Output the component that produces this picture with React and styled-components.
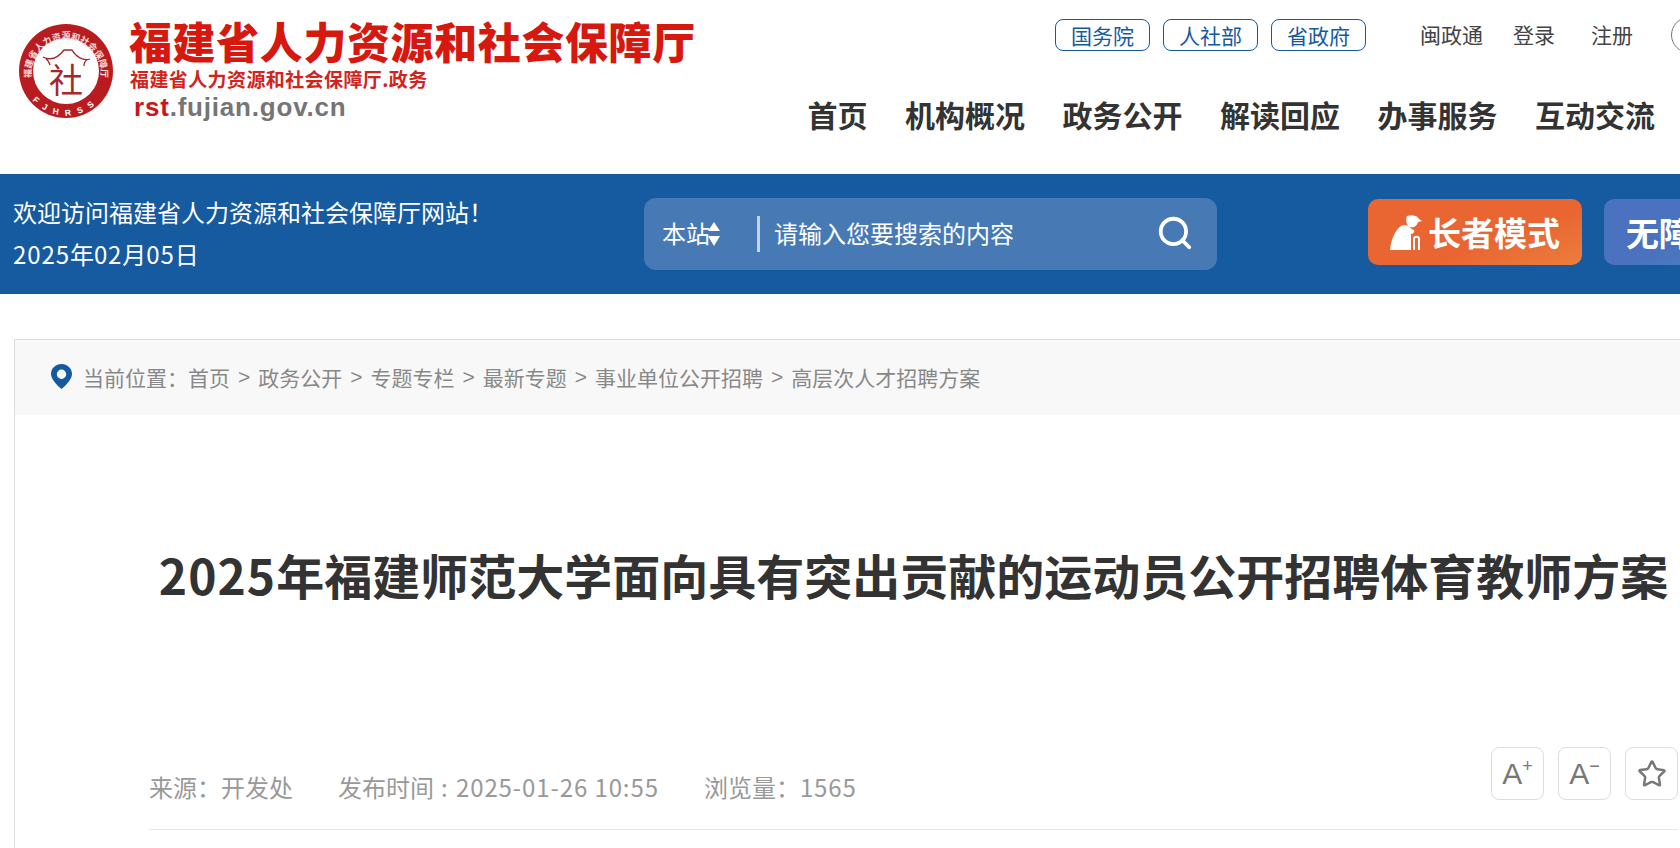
import React from 'react'
import styled, { createGlobalStyle } from 'styled-components'
import { Search, Star } from 'lucide-react'

const FONT = '"Noto Sans CJK SC", "Noto Sans", "Liberation Sans", sans-serif'

const GlobalStyle = createGlobalStyle`
  html, body {
    margin: 0;
    padding: 0;
    overflow: hidden;
    background: #fff;
    font-family: ${FONT};
  }
`

const Viewport = styled.div`
  width: 1680px;
  height: 848px;
  overflow: hidden;
`

const Page = styled.div`
  width: 1828px;
`

const Header = styled.header`
  height: 174px;
  display: flex;
  justify-content: space-between;
  padding: 0 121px 0 18px;
  box-sizing: border-box;
`

const Logo = styled.div`
  display: flex;
  align-items: flex-start;
  gap: 15px;
  padding-top: 23px;
`

const Brand = styled.div`
  display: flex;
  flex-direction: column;
  margin-top: -6px;
`

const BrandName = styled.div`
  font-size: 43px;
  line-height: 46px;
  font-weight: 900;
  letter-spacing: 0.6px;
  color: #d6180f;
  white-space: nowrap;
`

const BrandSub = styled.div`
  font-size: 19px;
  line-height: 24px;
  margin: 4px 0 0 1px;
  font-weight: 700;
  letter-spacing: 0.4px;
  color: #d2231c;
  white-space: nowrap;
`

const BrandUrl = styled.div`
  font-family: "Liberation Sans", sans-serif;
  font-size: 26px;
  line-height: 30px;
  margin: 1px 0 0 5px;
  font-weight: 700;
  letter-spacing: 0.8px;
  color: #757575;
  span {
    color: #c8161d;
  }
`

const HeaderRight = styled.div`
  display: flex;
  flex-direction: column;
  align-items: flex-end;
  padding-top: 19px;
`

const TopLinks = styled.div`
  display: flex;
  align-items: center;
  height: 32px;
`

const Pills = styled.div`
  display: flex;
  gap: 13px;
  margin-right: 54px;
`

const Pill = styled.a`
  width: 95px;
  height: 32px;
  box-sizing: border-box;
  border: 1px solid #15599f;
  border-radius: 8px;
  display: flex;
  align-items: center;
  justify-content: center;
  font-size: 21px;
  color: #15599f;
`

const TextLink = styled.a`
  font-size: 21px;
  line-height: 28px;
  margin-top: -2px;
  margin-left: ${p => p.$gap || 0}px;
  color: #444;
  white-space: nowrap;
`

const RoundButton = styled.div`
  width: 36px;
  height: 36px;
  box-sizing: border-box;
  border: 1px solid #777;
  border-radius: 50%;
  margin-left: 38px;
`

const Nav = styled.nav`
  display: flex;
  gap: 37.5px;
  margin: 43px 52px 0 0;
`

const NavItem = styled.a`
  font-size: 30px;
  line-height: 40px;
  font-weight: 700;
  color: #333;
  white-space: nowrap;
`

const Bar = styled.div`
  height: 120px;
  background: #165a9f;
  display: flex;
  align-items: center;
  padding-left: 13px;
`

const Welcome = styled.div`
  width: 631px;
  margin-top: -3px;
  font-size: 24px;
  line-height: 42px;
  color: #fff;
  white-space: nowrap;
  flex-shrink: 0;
`

const Num = styled.span`
  letter-spacing: ${p => p.$spacing || 0.9}px;
`

const SearchBox = styled.div`
  width: 573px;
  height: 72px;
  border-radius: 12px;
  background: #477ab5;
  display: flex;
  align-items: center;
  padding: 0 25px 0 18px;
  box-sizing: border-box;
  color: #fff;
  flex-shrink: 0;
`

const Scope = styled.div`
  display: flex;
  align-items: center;
  width: 95px;
  padding-bottom: 3px;
  font-size: 24px;
  svg {
    margin: 3px 0 0 -3px;
  }
`

const Divider = styled.div`
  width: 3px;
  height: 36px;
  background: #c5d3e6;
  margin-right: 14px;
`

const Placeholder = styled.div`
  flex: 1;
  padding-bottom: 4px;
  font-size: 24px;
`

const SearchIcon = styled(Search)`
  margin: -2px -2px 0 0;
`

const ModeButton = styled.a`
  width: ${p => p.$width}px;
  height: 66px;
  margin: -4px 0 0 ${p => p.$gap}px;
  border-radius: 10px;
  display: flex;
  align-items: center;
  justify-content: center;
  gap: 6px;
  background: ${p => p.$bg};
  font-size: 33px;
  font-weight: 700;
  color: #fff;
  white-space: nowrap;
  flex-shrink: 0;
`

const Panel = styled.section`
  margin: 45px 14px 0;
  border: 1px solid #ddd;
  border-bottom: 0;
`

const Crumbs = styled.div`
  height: 75px;
  box-sizing: border-box;
  padding: 0 0 2px 36px;
  background: #f8f8f8;
  display: flex;
  align-items: center;
  font-size: 21px;
  color: #888;
`

const CrumbLabel = styled.span`
  margin-left: 11px;
`

const Crumb = styled.a`
  color: #888;
`

const Sep = styled.span`
  margin: 0 8px;
  font-family: "Liberation Sans", sans-serif;
`

const Article = styled.article`
  padding: 0 135px 60px 134px;
`

const Title = styled.h1`
  margin: 0;
  padding-top: 124px;
  font-size: 48px;
  line-height: 70px;
  font-weight: 700;
  color: #333;
  text-align: center;
  white-space: nowrap;
`

const MetaRow = styled.div`
  margin-top: 138px;
  height: 83px;
  border-bottom: 1px solid #e8e8e8;
  display: flex;
  justify-content: space-between;
  box-sizing: border-box;
`

const Meta = styled.div`
  display: flex;
  gap: 45px;
  padding-top: 22px;
  font-size: 24px;
  line-height: 36px;
  color: #999;
  white-space: pre;
`

const Tools = styled.div`
  display: flex;
  gap: 14px;
`

const Tool = styled.button`
  width: 53px;
  height: 53px;
  padding: 0;
  box-sizing: border-box;
  background: #fff;
  border: 1px solid #ddd;
  border-radius: 8px;
  display: flex;
  align-items: center;
  justify-content: center;
  font-family: "Liberation Sans", sans-serif;
  font-size: 30px;
  color: #777;
  sup {
    font-size: 18px;
    line-height: 1;
    margin-top: -16px;
  }
`

function Seal() {
  return (
    <svg width="96" height="96" viewBox="0 0 96 96">
      <defs>
        <path id="sealTop" d="M14.2 60.300 A35 35 0 1 1 81.800 60.300" />
        <path id="sealBottom" d="M7.700 66.800 A44.500 44.500 0 0 0 88.300 66.800" />
      </defs>
      <circle cx="48" cy="48" r="47" fill="#b91c20" />
      <circle cx="48" cy="48" r="33" fill="#fff" />
      <text fontSize="9" fontWeight="700" fill="#f6dede" fontFamily={FONT}>
        <textPath href="#sealTop" startOffset="50%" textAnchor="middle">福建省人力资源和社会保障厅</textPath>
      </text>
      <text fontSize="8.500" fontWeight="700" fill="#fff" letterSpacing="7" fontFamily='"Liberation Sans", sans-serif'>
        <textPath href="#sealBottom" startOffset="50%" textAnchor="middle">FJHRSS</textPath>
      </text>
      <path d="M25 34 C33 38 40 35 46 27 L54 27 C58 34 65 38 72 36 M28 36 C31 38 31 40 32 42 M69 37 C67 38 66 40 66 43" fill="none" stroke="#a3282b" strokeWidth="1.300" />
      <text x="48" y="70" fontSize="34" textAnchor="middle" fill="#a3282b" fontFamily={FONT}>社</text>
    </svg>
  )
}

function ScopeArrows() {
  return (
    <svg width="14" height="26" viewBox="0 0 14 26">
      <path d="M7 1 L13 10 H1 Z M1 15 H13 L7 25 Z" fill="#fff" />
    </svg>
  )
}

function ElderIcon() {
  return (
    <svg width="32" height="36" viewBox="0 0 32 36">
      <path d="M17 2 C22 0 28 2 29 5 L32 7 L28 8 C27 12 24 14 20 13 C17 12 15 6 17 2 Z" fill="#fff" />
      <path d="M11 12 C14 10 17 11 20 13 C21 15 22 15 24 16 C25 18 23 20 21 20 L21 36 H0 C1 26 5 16 11 12 Z" fill="#fff" />
      <path d="M24 36 V25 C24 22 29 22 29 25 V36" fill="none" stroke="#fff" strokeWidth="2" />
    </svg>
  )
}

function PinIcon() {
  return (
    <svg width="21" height="25" viewBox="0 0 21 25">
      <path fillRule="evenodd" d="M10.5 0 C16.3 0 21 4.4 21 10 C21 15 15 21.500 10.500 25 C6 21.500 0 15 0 10 C0 4.400 4.700 0 10.500 0 Z M10.500 5.500 A4.700 4.700 0 1 0 10.500 14.900 A4.700 4.700 0 1 0 10.500 5.500 Z" fill="#15599f" />
    </svg>
  )
}

const crumbs = ['首页', '政务公开', '专题专栏', '最新专题', '事业单位公开招聘', '高层次人才招聘方案']
const navItems = ['首页', '机构概况', '政务公开', '解读回应', '办事服务', '互动交流']

export default function App() {
  return (
    <Viewport>
      <GlobalStyle />
      <Page>
        <Header>
          <Logo>
            <Seal />
            <Brand>
              <BrandName>福建省人力资源和社会保障厅</BrandName>
              <BrandSub>福建省人力资源和社会保障厅.政务</BrandSub>
              <BrandUrl><span>rst</span>.fujian.gov.cn</BrandUrl>
            </Brand>
          </Logo>
          <HeaderRight>
            <TopLinks>
              <Pills>
                <Pill>国务院</Pill>
                <Pill>人社部</Pill>
                <Pill>省政府</Pill>
              </Pills>
              <TextLink>闽政通</TextLink>
              <TextLink $gap={30}>登录</TextLink>
              <TextLink $gap={36}>注册</TextLink>
              <RoundButton />
            </TopLinks>
            <Nav>
              {navItems.map(n => <NavItem key={n}>{n}</NavItem>)}
            </Nav>
          </HeaderRight>
        </Header>

        <Bar>
          <Welcome>
            <div>欢迎访问福建省人力资源和社会保障厅网站！</div>
            <div><Num>2025</Num>年<Num>02</Num>月<Num>05</Num>日</div>
          </Welcome>
          <SearchBox>
            <Scope>本站<ScopeArrows /></Scope>
            <Divider />
            <Placeholder>请输入您要搜索的内容</Placeholder>
            <SearchIcon size={38} strokeWidth={2.4} color="#fff" />
          </SearchBox>
          <ModeButton $width={214} $gap={151} $bg="linear-gradient(160deg, #e96532 60%, #ec7e3c 100%)">
            <ElderIcon />长者模式
          </ModeButton>
          <ModeButton $width={209} $gap={22} $bg="linear-gradient(160deg, #4a72bf 50%, #4a8abb 100%)">
            无障碍模式
          </ModeButton>
        </Bar>

        <Panel>
          <Crumbs>
            <PinIcon />
            <CrumbLabel>当前位置：</CrumbLabel>
            {crumbs.map((c, i) => (
              <React.Fragment key={c}>
                {i > 0 && <Sep>&gt;</Sep>}
                <Crumb>{c}</Crumb>
              </React.Fragment>
            ))}
          </Crumbs>
          <Article>
            <Title><Num $spacing={1}>2025</Num>年福建师范大学面向具有突出贡献的运动员公开招聘体育教师方案</Title>
            <MetaRow>
              <Meta>
                <span>来源：开发处</span>
                <span>发布时间<Num $spacing={1.5}> : </Num><Num>2025-01-26 10:55</Num></span>
                <span>浏览量：<Num>1565</Num></span>
              </Meta>
              <Tools>
                <Tool>A<sup>+</sup></Tool>
                <Tool>A<sup>−</sup></Tool>
                <Tool><Star size={30} strokeWidth={2} /></Tool>
              </Tools>
            </MetaRow>
          </Article>
        </Panel>
      </Page>
    </Viewport>
  )
}
